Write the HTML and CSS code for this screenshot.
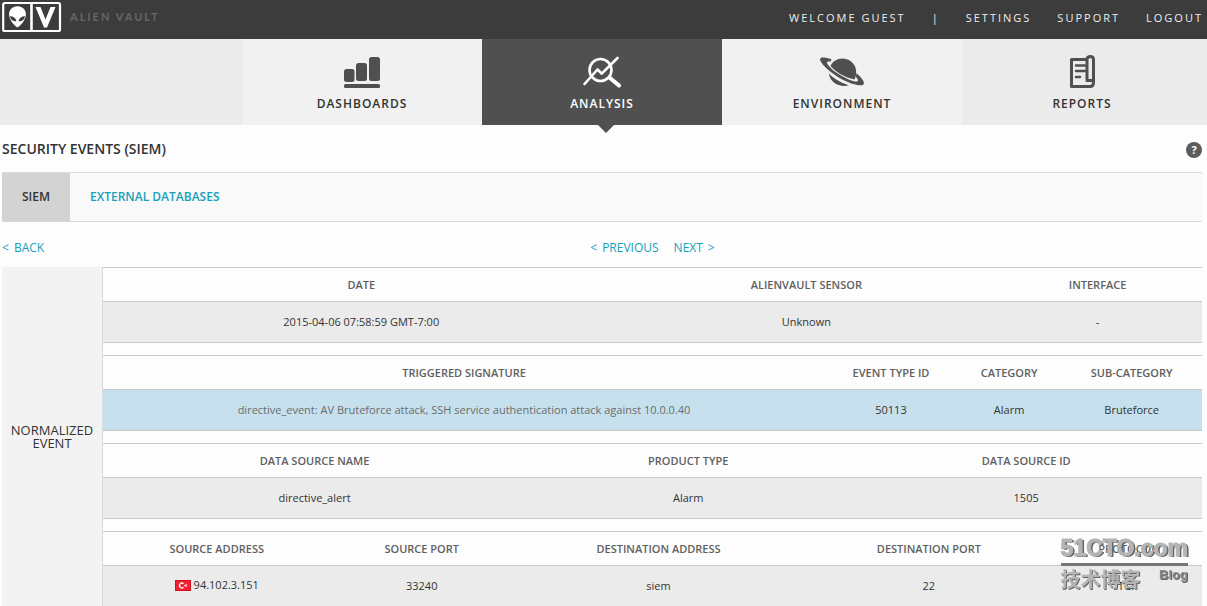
FILE: index.html
```html
<!DOCTYPE html>
<html lang="en">
<head>
<meta charset="utf-8">
<title>Security Events (SIEM)</title>
<link rel="stylesheet" href="styles.css">
</head>
<body>
<header class="topbar">
  <a class="brand" href="#" aria-label="Alien Vault">
    <svg class="brand-mark" width="60" height="32" viewBox="0 0 60 32" aria-hidden="true">
      <rect x="1.2" y="2" width="56.800" height="28" rx="1.5" fill="none" stroke="#fff" stroke-width="2.2"/>
      <path d="M29.500 2v28" stroke="#fff" stroke-width="2.6"/>
      <path d="M15.500 5.200c5.200 0 8.700 3.600 8.400 8.600-.3 5-4.600 10.400-8.400 12.800-3.800-2.400-8.100-7.800-8.400-12.800-.3-5 3.200-8.600 8.400-8.600z" fill="#fff"/>
      <path d="M8 15.100c3 .2 6 2 6.300 5.200-3 .2-6-1.600-6.300-5.200zM23 15.100c-3 .2-6 2-6.300 5.200 3 .2 6-1.600 6.300-5.200z" fill="#3c3c3c"/>
      <path d="M33.500 6h5l5 12.500L48.500 6h5L45 26.500h-3z" fill="#fff"/>
    </svg>
    <span class="brand-name">ALIEN VAULT</span>
  </a>
  <nav class="account" aria-label="Account">
    <span>WELCOME GUEST</span>
    <span>|</span>
    <a href="#">SETTINGS</a>
    <a href="#">SUPPORT</a>
    <a href="#">LOGOUT</a>
  </nav>
</header>

<nav class="mainnav" aria-label="Main">
  <a class="tab" href="#">
    <svg width="48" height="36" viewBox="0 0 48 36" fill="#505050" aria-hidden="true">
      <rect x="6" y="15" width="10.500" height="13" rx="2.500"/>
      <rect x="18" y="9" width="11" height="18" rx="2.500"/>
      <rect x="31" y="3" width="11" height="24" rx="2.500"/>
      <rect x="6" y="30" width="36" height="4" rx="1.500"/>
    </svg>
    <span>DASHBOARDS</span>
  </a>
  <a class="tab active" href="#" aria-current="page">
    <svg width="48" height="36" viewBox="0 0 48 36" fill="none" stroke="#fff" stroke-linecap="round" stroke-linejoin="round" aria-hidden="true">
      <circle cx="22.500" cy="16" r="11" stroke-width="2.600"/>
      <path d="M6.500 30L19.500 15.500l4.200 4.200L39.500 4" stroke-width="2.600"/>
      <path d="M32 24l9 7.500" stroke-width="4.200"/>
    </svg>
    <span>ANALYSIS</span>
  </a>
  <a class="tab" href="#">
    <svg width="48" height="36" viewBox="0 0 48 36" fill="#505050" aria-hidden="true">
      <path d="M12.500 12C15 7 19.500 4.200 25 4.500c8 .5 13.500 6.500 13.200 14 0 2.500-.6 5-1.700 7C27 23.500 18 18.500 12.500 12z"/>
      <path d="M10.800 19.500c5 5.500 13 9.500 20 11.800-8.500 2.200-18.500-1.800-20-11.800z"/>
      <path d="M13.500 5.300C7 3 2.300 2.800 2.100 5c-.3 4.500 11.400 15 24.200 21.500 9.200 4.600 18.600 6.200 19.500 3.500.8-2.500-2.600-6.800-7.300-10.800l-.6 3.600c1.600 2 2.400 3.500 1.900 4.200-1.400 1.700-8-.5-15-4.400C15.500 17.700 8 10.500 9 8.100c.3-.8 1.600-.8 3.300-.3z"/>
    </svg>
    <span>ENVIRONMENT</span>
  </a>
  <a class="tab tab-last" href="#">
    <svg width="48" height="36" viewBox="0 0 48 36" fill="none" stroke="#505050" stroke-linejoin="round" aria-hidden="true">
      <path d="M29 5.500H13.500v27h18.500c2.500 0 3.500-1.500 3.500-4V6c0-2-1-3.500-3-3.500S29 3.500 29 5.500V26.500h6" stroke-width="3"/>
      <path d="M18 11.500h9M18 17h9M18 23h4" stroke-width="2.600" stroke-linecap="round"/>
    </svg>
    <span>REPORTS</span>
  </a>
</nav>

<main class="page">
  <div class="title-row">
    <h1>SECURITY EVENTS (SIEM)</h1>
    <button class="help" type="button" aria-label="Help">?</button>
  </div>

  <nav class="subnav" aria-label="Event source">
    <a class="sub current" href="#">SIEM</a>
    <a class="sub" href="#">EXTERNAL DATABASES</a>
  </nav>

  <div class="pager">
    <a class="step" href="#"><span>&lt;</span><span>BACK</span></a>
    <div class="pager-steps">
      <a class="step" href="#"><span>&lt;</span><span>PREVIOUS</span></a>
      <a class="step" href="#"><span>NEXT</span><span>&gt;</span></a>
    </div>
  </div>

  <section class="event">
    <h2 class="event-label">NORMALIZED EVENT</h2>
    <div class="event-tables">
      <table>
        <thead><tr><th class="w47">DATE</th><th class="w34">ALIENVAULT SENSOR</th><th>INTERFACE</th></tr></thead>
        <tbody><tr><td>2015-04-06 07:58:59 GMT-7:00</td><td>Unknown</td><td>-</td></tr></tbody>
      </table>
      <table>
        <thead><tr><th class="w66">TRIGGERED SIGNATURE</th><th class="w12">EVENT TYPE ID</th><th class="w9">CATEGORY</th><th>SUB-CATEGORY</th></tr></thead>
        <tbody><tr class="highlight"><td class="muted">directive_event: AV Bruteforce attack, SSH service authentication attack against 10.0.0.40</td><td>50113</td><td>Alarm</td><td>Bruteforce</td></tr></tbody>
      </table>
      <table>
        <thead><tr><th class="w38">DATA SOURCE NAME</th><th class="w29">PRODUCT TYPE</th><th>DATA SOURCE ID</th></tr></thead>
        <tbody><tr><td>directive_alert</td><td>Alarm</td><td>1505</td></tr></tbody>
      </table>
      <table>
        <thead><tr><th class="w21">SOURCE ADDRESS</th><th class="w17">SOURCE PORT</th><th class="w26">DESTINATION ADDRESS</th><th class="w23">DESTINATION PORT</th><th>PROTOCOL</th></tr></thead>
        <tbody><tr>
          <td><span class="address"><svg width="16" height="13" viewBox="0 0 16 13" aria-hidden="true"><rect x=".5" y="2.500" width="15" height="10" fill="#f3202f" stroke="#cf1020"/><path d="M8.500 5.700a2.400 2.400 0 1 0 0 3.600" fill="none" stroke="#fff" stroke-width="1.300"/><path d="M9 7.500l3-1-1 1 1 1z" fill="#fff" stroke="#fff" stroke-width=".5"/></svg>94.102.3.151</span></td>
          <td>33240</td><td>siem</td><td>22</td><td>TCP</td>
        </tr></tbody>
      </table>
    </div>
  </section>
</main>

<aside class="watermark">
  <div class="wm-site">51CTO.com</div>
  <div class="wm-foot"><span class="wm-cn">技术博客</span><span class="wm-blog">Blog</span></div>
</aside>
</body>
</html>
```
FILE: styles.css
```css
* { box-sizing: border-box; }

body {
  margin: 0;
  background: #fdfdfd;
  color: #333;
  font-family: "Open Sans", "Noto Sans", sans-serif;
  font-size: 11px;
}

a { color: #16a1ba; text-decoration: none; }

/* Top bar */
.topbar {
  display: flex;
  justify-content: space-between;
  height: 39px;
  padding: 0 4px 0 2px;
  background: #3c3c3c;
}
.brand { display: flex; gap: 8px; padding-top: 1px; }
.brand-name {
  color: #666;
  font: bold 11px/32px Lato, sans-serif;
  letter-spacing: 2px;
}
.account {
  display: flex;
  gap: 26px;
  color: #eee;
  font-size: 11px;
  line-height: 36px;
  letter-spacing: 2px;
}
.account a { color: inherit; }

/* Main navigation */
.mainnav {
  display: flex;
  justify-content: flex-end;
  height: 86px;
  padding-right: 5px;
  background: #ebebeb;
}
.tab {
  position: relative;
  display: flex;
  flex-direction: column;
  align-items: center;
  gap: 4px;
  width: 240px;
  padding-top: 15px;
  background: #f1f1f1;
  color: #333;
  font-size: 12px;
  font-weight: 600;
  line-height: 20px;
  letter-spacing: 1px;
}
.tab-last { background: #ebebeb; }
.tab.active { background: #505050; color: #fff; }
.tab.active::after {
  content: "";
  position: absolute;
  top: 100%;
  left: 50%;
  margin-left: -4px;
  border: 8px solid transparent;
  border-top-color: #505050;
  border-bottom: 0;
}

/* Page heading and sub navigation */
.page { padding: 0 5px 0 2px; }
.title-row {
  display: flex;
  align-items: center;
  justify-content: space-between;
  height: 47px;
  padding-top: 2px;
}
h1 { margin: 0; font-size: 14px; font-weight: 600; line-height: 20px; padding-bottom: 2px; }
.help {
  width: 16px;
  height: 16px;
  padding: 0;
  border: 0;
  border-radius: 50%;
  background: #5c5c5c;
  color: #fff;
  font: bold 11px/16px "Open Sans", sans-serif;
}
.subnav {
  display: flex;
  height: 50px;
  border: solid #dadada;
  border-width: 1px 0;
  background: #f9f9f9;
}
.sub {
  padding: 0 20px;
  font-size: 12px;
  font-weight: 600;
  line-height: 48px;
}
.sub.current { background: #d3d3d3; color: #333; }

.pager {
  display: flex;
  height: 45px;
  font-size: 12px;
  line-height: 51px;
}
.pager > .step { width: 101px; }
.pager-steps { display: flex; flex: 1; justify-content: center; gap: 15px; }
.step { display: flex; gap: 5px; }

/* Event details */
.event { display: flex; }
.event-label {
  display: flex;
  align-items: center;
  flex: none;
  width: 101px;
  margin: 0;
  border-right: 1px solid #dadada;
  background: #f3f3f3;
  font-size: 13px;
  font-weight: 400;
  line-height: 13px;
  text-align: center;
}
.event-tables { display: grid; flex: 1; gap: 12px; }
table {
  width: 100%;
  border-collapse: separate;
  border-spacing: 0;
  table-layout: fixed;
}
th, td { padding: 0; text-align: center; }
th {
  height: 34px;
  border-top: 1px solid #c8c8c8;
  color: #606060;
  font-weight: 600;
}
td {
  height: 42px;
  padding-bottom: 2px;
  border: solid #c8c8c8;
  border-width: 1px 0;
  background: #ebebeb;
}
.highlight td { background: #c6e1ed; }
.highlight .muted { color: #6c6c6c; }
.address { display: inline-flex; align-items: center; gap: 3px; }

.w9 { width: 9.5%; }
.w12 { width: 12%; }
.w17 { width: 16.6%; }
.w21 { width: 20.7%; }
.w23 { width: 22.7%; }
.w26 { width: 26.5%; }
.w29 { width: 29.5%; }
.w34 { width: 34%; }
.w38 { width: 38.5%; }
.w47 { width: 47%; }
.w66 { width: 65.7%; }

/* Watermark over the page corner */
.watermark {
  position: fixed;
  right: 19px;
  bottom: 14px;
  color: #b4b4b4;
  text-shadow: 1px 1px 0 #666;
  pointer-events: none;
}
.wm-site {
  border-bottom: 3px solid #777;
  font: bold 23px/30px "Liberation Sans", sans-serif;
  text-shadow: 2px 1px 0 #666;
  -webkit-text-stroke: 1px #b4b4b4;
}
.wm-foot { display: flex; justify-content: space-between; }
.wm-cn { font: bold 20px/26px "Noto Sans CJK SC", sans-serif; }
.wm-blog { color: #888; font: bold 13px/18px "Liberation Sans", sans-serif; }
```
